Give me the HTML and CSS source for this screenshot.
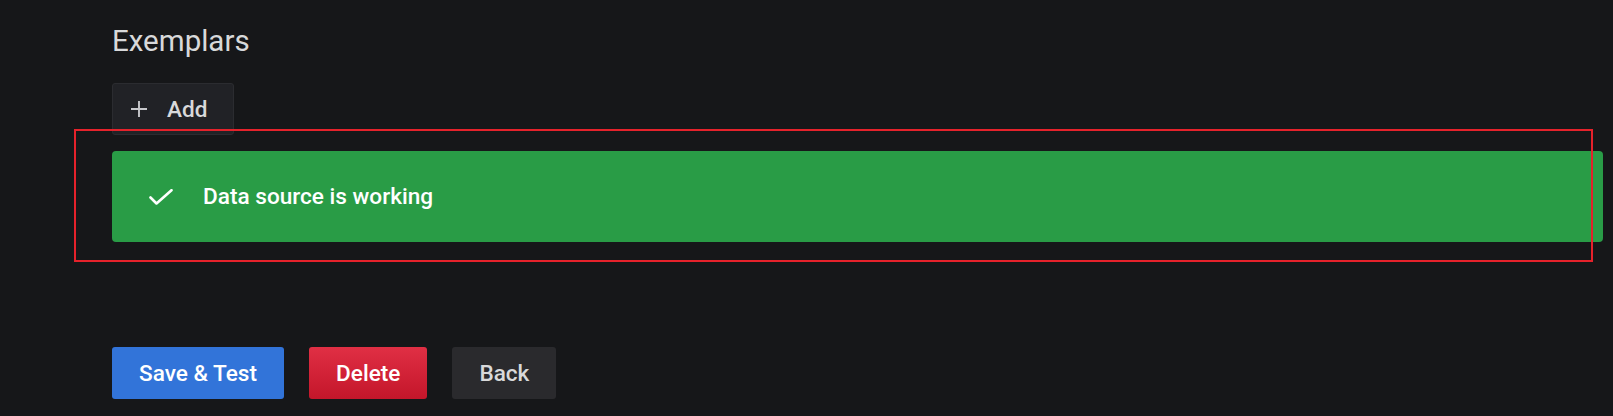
FILE: index.html
```html
<!DOCTYPE html>
<html>
<head>
<meta charset="utf-8">
<link rel="stylesheet" href="styles.css">
</head>
<body>
<div class="page">
  <h3 class="section-title">Exemplars</h3>
  <button class="btn btn-add">
    <svg class="plus" viewBox="0 0 18 18" width="18" height="18"><path d="M9 1v16M1 9h16" stroke="#c7c8cb" stroke-width="1.9" fill="none"/></svg>
    <span>Add</span>
  </button>
  <div class="alert">
    <svg class="check" viewBox="0 0 24 16" width="24" height="16"><path d="M1.5 8.5l6 6L22.5 1.2" stroke="#fff" stroke-width="2.6" fill="none" stroke-linecap="round" stroke-linejoin="round"/></svg>
    <span class="alert-text">Data source is working</span>
  </div>
  <div class="actions">
    <button class="btn btn-primary">Save &amp; Test</button>
    <button class="btn btn-danger">Delete</button>
    <button class="btn btn-secondary">Back</button>
  </div>
</div>
<div class="annotation"></div>
</body>
</html>
```

FILE: styles.css
```css
html, body {
  margin: 0;
  padding: 0;
  background: #161719;
  width: 1613px;
  height: 416px;
  overflow: hidden;
  font-family: Roboto, "Liberation Sans", sans-serif;
}
.page {
  padding: 24px 10px 0 112px;
  display: flex;
  flex-direction: column;
  align-items: flex-start;
}
.section-title {
  margin: 0;
  font-size: 29.5px;
  line-height: 34px;
  font-weight: 400;
  color: #d8d9da;
}
.btn {
  font-family: Roboto, "Liberation Sans", sans-serif;
  font-weight: 500;
  font-size: 22.6px;
  height: 52px;
  padding: 0 27px;
  border: none;
  border-radius: 3px;
  color: #fff;
  display: inline-flex;
  align-items: center;
  cursor: pointer;
}
.btn-add {
  margin-top: 25px;
  height: 52px;
  padding: 0 26px 0 17px;
  background: #212226;
  border: 1px solid #2b2c30;
  color: #d8d9da;
  gap: 19px;
}
.plus { display: block; }
.alert {
  margin-top: 16px;
  align-self: stretch;
  height: 91px;
  background: #299c46;
  border-radius: 4px;
  display: flex;
  align-items: center;
  padding-left: 37px;
  gap: 30px;
}
.check { display: block; }
.alert-text {
  color: #fff;
  font-size: 22.6px;
  font-weight: 500;
}
.actions {
  margin-top: 105px;
  display: flex;
  gap: 25px;
}
.btn-primary {
  background: #3274d9;
}
.btn-danger {
  background: linear-gradient(#e02f44, #c4162a);
}
.btn-secondary {
  background: #2a2a2d;
  color: #d8d9da;
}
.annotation {
  position: absolute;
  left: 74px;
  top: 129px;
  width: 1515px;
  height: 129px;
  border: 2px solid #e5222b;
  pointer-events: none;
}
```
